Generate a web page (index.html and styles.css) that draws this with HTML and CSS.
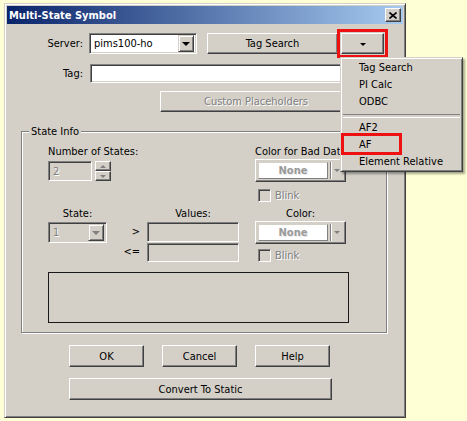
FILE: index.html
```html
<!DOCTYPE html>
<html lang="en">
  <head>
    <meta charset="UTF-8" />
    <title>Multi-State Symbol</title>
    <link rel="stylesheet" href="styles.css">
  </head>
  <body>
    <div class="window">
      <div class="titlebar">
        <span class="title">Multi-State Symbol</span>
        <span class="btn-close">
          <svg width="8" height="7" viewBox="0 0 8 7"><path d="M0.5 0.5 L7.5 6.5 M7.5 0.5 L0.5 6.5" stroke="#000" stroke-width="1.6" /></svg>
        </span>
      </div>

      <div class="dialog">
        <div class="row row-server">
          <label class="lbl">Server:</label>
          <div class="combo combo-server">
            <span class="combo-text">pims100-ho</span>
            <span class="combo-btn"><i class="tri"></i></span>
          </div>
          <div class="btn btn-search">Tag Search</div>
          <div class="split">
            <div class="btn btn-split"><i class="tri tri-small"></i></div>
            <div class="menu">
              <div class="menu-item">Tag Search</div>
              <div class="menu-item">PI Calc</div>
              <div class="menu-item">ODBC</div>
              <div class="menu-sep"></div>
              <div class="menu-item">AF2</div>
              <div class="menu-item">AF<span class="mark"></span></div>
              <div class="menu-item">Element Relative</div>
            </div>
          </div>
        </div>

        <div class="row row-tag">
          <label class="lbl lbl-tag">Tag:</label>
          <div class="field field-tag"></div>
        </div>

        <div class="row row-custom">
          <div class="btn btn-custom disabled">Custom Placeholders</div>
        </div>

        <div class="group">
          <span class="group-title">State Info</span>

          <div class="state-top">
            <div class="col-num">
              <div class="cap">Number of States:</div>
              <div class="spin-row">
                <div class="field field-off field-num"><span class="disabled">2</span></div>
                <div class="spin">
                  <span class="spin-btn"><i class="tri-up"></i></span>
                  <span class="spin-btn"><i class="tri-dn"></i></span>
                </div>
              </div>
            </div>
            <div class="col-bad">
              <div class="cap">Color for Bad Data:</div>
              <div class="color-combo">
                <span class="swatch">None</span>
                <span class="color-arrow"><i class="tri-dn"></i></span>
              </div>
              <div class="check"><span class="box"></span><span class="disabled">Blink</span></div>
            </div>
          </div>

          <div class="state-row">
            <div class="col-state">
              <div class="cap center">State:</div>
              <div class="combo combo-state">
                <span class="combo-text disabled">1</span>
                <span class="combo-btn"><i class="tri tri-grey"></i></span>
              </div>
            </div>
            <div class="col-cmp">
              <div class="cmp">&gt;</div>
              <div class="cmp">&lt;=</div>
            </div>
            <div class="col-values">
              <div class="cap center">Values:</div>
              <div class="field field-off field-val"></div>
              <div class="field field-off field-val field-val2"></div>
            </div>
            <div class="col-color">
              <div class="cap center">Color:</div>
              <div class="color-combo">
                <span class="swatch">None</span>
                <span class="color-arrow"><i class="tri-dn"></i></span>
              </div>
              <div class="check check-2"><span class="box"></span><span class="disabled">Blink</span></div>
            </div>
          </div>

          <div class="preview"></div>
        </div>

        <div class="row row-buttons">
          <div class="btn btn-std">OK</div>
          <div class="btn btn-std">Cancel</div>
          <div class="btn btn-std">Help</div>
        </div>
        <div class="row row-convert">
          <div class="btn btn-convert">Convert To Static</div>
        </div>
      </div>
    </div>
  </body>
</html>
```

FILE: styles.css
```css
* {
  box-sizing: border-box;
}
body {
  margin: 0;
  background-color: #ffffd5;
  font-family: "DejaVu Sans Condensed", "Liberation Sans", sans-serif;
  font-size: 11px;
  line-height: 13px;
  color: #000;
}
.window {
  margin: 3px 0 0 4px;
  width: 402px;
  background-color: #d4d0c8;
  border: 1px solid;
  border-color: #d4d0c8 #404040 #404040 #d4d0c8;
  box-shadow: inset 1px 1px #fff, inset -1px -1px #808080;
  padding: 2px;
}
.titlebar {
  height: 18px;
  display: flex;
  align-items: center;
  justify-content: space-between;
  padding: 0 2px 0 2px;
  background: linear-gradient(to right, #0a246a, #a6caf0);
}
.title {
  color: #fff;
  font-weight: bold;
  font-family: "DejaVu Sans Condensed", "Liberation Sans", sans-serif;
}
.btn-close {
  width: 16px;
  height: 14px;
  display: flex;
  align-items: center;
  justify-content: center;
  background-color: #d4d0c8;
  border: 1px solid;
  border-color: #fff #404040 #404040 #fff;
  box-shadow: inset -1px -1px #808080;
}
.dialog {
  padding: 9px 0 15px 0;
}
.row {
  display: flex;
  align-items: center;
}
.lbl {
  width: 76px;
  text-align: right;
}

/* 3d controls */
.btn {
  display: flex;
  align-items: center;
  justify-content: center;
  background-color: #d4d0c8;
  border: 1px solid;
  border-color: #fff #404040 #404040 #fff;
  box-shadow: inset -1px -1px #808080;
}
.field,
.combo {
  background-color: #fff;
  border: 1px solid;
  border-color: #808080 #fff #fff #808080;
  box-shadow: inset 1px 1px #404040, inset -1px -1px #d4d0c8;
}
.field-off {
  background-color: #d4d0c8;
}
.disabled {
  color: #808080;
  text-shadow: 1px 1px 0 #fff;
}
.tri {
  display: block;
  width: 0;
  height: 0;
  border-left: 4px solid transparent;
  border-right: 4px solid transparent;
  border-top: 4px solid #000;
}
.tri-small {
  border-left-width: 3px;
  border-right-width: 3px;
  border-top-width: 3px;
}
.tri-grey {
  border-top-color: #808080;
}
.tri-up,
.tri-dn {
  display: block;
  width: 0;
  height: 0;
  border-left: 3px solid transparent;
  border-right: 3px solid transparent;
}
.tri-up {
  border-bottom: 3px solid #808080;
}
.tri-dn {
  border-top: 3px solid #808080;
}

/* server row */
.row-server {
  height: 21px;
}
.lbl + .combo-server {
  margin-left: 6px;
}
.combo {
  display: flex;
  align-items: center;
  padding: 2px;
}
.combo-server {
  width: 108px;
  height: 21px;
}
.combo-text {
  flex: 1;
  padding-left: 2px;
}
.combo-btn {
  width: 16px;
  height: 17px;
  display: flex;
  align-items: center;
  justify-content: center;
  background-color: #d4d0c8;
  border: 1px solid;
  border-color: #d4d0c8 #404040 #404040 #d4d0c8;
  box-shadow: inset 1px 1px #fff, inset -1px -1px #808080;
}
.btn-search {
  margin-left: 10px;
  width: 131px;
  height: 21px;
}
.split {
  position: relative;
  margin-left: 3px;
  z-index: 3;
}
.btn-split {
  width: 43px;
  height: 21px;
  outline: 3px solid #ee1111;
  outline-offset: 1px;
  padding-top: 2px;
}
.menu {
  position: absolute;
  top: 24px;
  left: -1px;
  width: 123px;
  background-color: #d4d0c8;
  border: 1px solid;
  border-color: #d4d0c8 #404040 #404040 #d4d0c8;
  box-shadow: inset 1px 1px #fff, inset -1px -1px #808080, 2px 2px 2px rgba(0, 0, 0, 0.35);
  padding: 1px;
}
.menu-item {
  position: relative;
  height: 17px;
  line-height: 17px;
  padding-left: 17px;
}
.menu-sep {
  height: 9px;
  margin: 0 1px;
  padding-top: 4px;
}
.menu-sep::before {
  content: "";
  display: block;
  height: 2px;
  border-top: 1px solid #808080;
  border-bottom: 1px solid #fff;
}
.mark {
  position: absolute;
  left: -1px;
  top: -3px;
  width: 61px;
  height: 22px;
  border: 3px solid #ee1111;
}

/* tag row */
.row-tag {
  margin-top: 10px;
}
.field-tag {
  margin-left: 7px;
  width: 294px;
  height: 19px;
}
.row-custom {
  margin-top: 8px;
}
.btn-custom {
  margin-left: 153px;
  width: 192px;
  height: 21px;
}

/* group box */
.group {
  position: relative;
  margin: 19px 0 0 14px;
  width: 366px;
  height: 202px;
  border: 1px solid #808080;
  box-shadow: inset 1px 1px #fff, 1px 1px #fff;
  padding: 13px 0 0 26px;
}
.group-title {
  position: absolute;
  top: -7px;
  left: 7px;
  padding: 0 2px;
  background-color: #d4d0c8;
}
.state-top {
  display: flex;
}
.col-num {
  width: 207px;
}
.cap {
  height: 13px;
  white-space: nowrap;
}
.center {
  text-align: center;
}
.spin-row {
  display: flex;
  margin-top: 3px;
}
.field-num {
  width: 44px;
  height: 20px;
  padding: 3px 0 0 4px;
}
.spin {
  margin-left: 3px;
  display: flex;
  flex-direction: column;
}
.spin-btn {
  width: 16px;
  height: 10px;
  display: flex;
  align-items: center;
  justify-content: center;
  background-color: #d4d0c8;
  border: 1px solid;
  border-color: #fff #404040 #404040 #fff;
  box-shadow: inset -1px -1px #808080;
}
.color-combo {
  display: flex;
  width: 91px;
  height: 23px;
  margin-top: 1px;
  padding: 2px;
  background-color: #d4d0c8;
  border: 1px solid;
  border-color: #fff #404040 #404040 #fff;
  box-shadow: inset -1px -1px #808080;
}
.swatch {
  flex: 1;
  display: flex;
  align-items: center;
  justify-content: center;
  background-color: #fff;
  border: 1px solid;
  border-color: #d4d0c8 #808080 #808080 #d4d0c8;
  font-weight: bold;
  color: #9a9a9a;
  text-shadow: 1px 1px 0 #e8e8e8;
}
.color-arrow {
  width: 13px;
  display: flex;
  align-items: center;
  justify-content: center;
  border-left: 1px solid #808080;
  box-shadow: inset 1px 0 #fff;
  margin-left: 2px;
}
.check {
  display: flex;
  align-items: center;
  margin: 7px 0 0 3px;
  height: 13px;
}
.check-2 {
  margin-top: 5px;
}
.box {
  width: 13px;
  height: 13px;
  margin-right: 4px;
  background-color: #d4d0c8;
  border: 1px solid;
  border-color: #808080 #fff #fff #808080;
  box-shadow: inset 1px 1px #404040, inset -1px -1px #d4d0c8;
}

/* state row */
.state-row {
  display: flex;
  margin-top: 5px;
}
.col-state {
  width: 59px;
}
.combo-state {
  margin-top: 2px;
  height: 21px;
  background-color: #d4d0c8;
}
.col-cmp {
  width: 40px;
  padding: 15px 7px 0 0;
}
.cmp {
  height: 20px;
  line-height: 20px;
  text-align: right;
}
.col-values {
  width: 92px;
}
.field-val {
  margin-top: 2px;
  height: 20px;
}
.field-val2 {
  margin-top: 1px;
  height: 19px;
}
.col-color {
  margin-left: 16px;
  width: 91px;
}
.preview {
  margin-top: 10px;
  width: 301px;
  height: 51px;
  border: 1px solid #1a1a1a;
}

/* bottom buttons */
.row-buttons {
  margin: 12px 0 0 62px;
  gap: 18px;
}
.btn-std {
  width: 75px;
  height: 22px;
}
.row-convert {
  margin: 11px 0 0 62px;
}
.btn-convert {
  width: 263px;
  height: 22px;
}
```
